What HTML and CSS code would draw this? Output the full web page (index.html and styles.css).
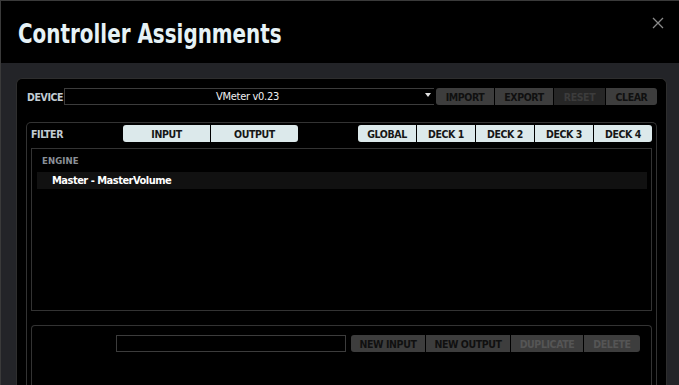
FILE: index.html
```html
<!DOCTYPE html>
<html lang="en">
<head>
  <meta charset="UTF-8" />
  <title>Controller Assignments</title>
  <link rel="stylesheet" href="styles.css">
</head>
<body>
  <div class="dialog">
    <div class="titlebar">
      <h1 class="title">Controller Assignments</h1>
      <svg class="close" width="12" height="12" viewBox="0 0 12 12">
        <path d="M1 1 L11 11 M11 1 L1 11" stroke="#8a8a8a" stroke-width="1.3" fill="none" />
      </svg>
    </div>

    <div class="content">
      <div class="panel">
        <div class="device-row">
          <span class="label">DEVICE</span>
          <div class="select">
            <span>VMeter v0.23</span>
            <span class="arrow"></span>
          </div>
          <div class="btns dark">
            <button>IMPORT</button>
            <button>EXPORT</button>
            <button class="off">RESET</button>
            <button>CLEAR</button>
          </div>
        </div>

        <div class="group">
          <div class="filter-row">
            <span class="label filter-label">FILTER</span>
            <div class="btns light io">
              <button>INPUT</button>
              <button>OUTPUT</button>
            </div>
            <div class="btns light decks">
              <button>GLOBAL</button>
              <button>DECK 1</button>
              <button>DECK 2</button>
              <button>DECK 3</button>
              <button>DECK 4</button>
            </div>
          </div>

          <div class="list">
            <div class="section">ENGINE</div>
            <div class="row">Master - MasterVolume</div>
          </div>

          <div class="editor">
            <div class="name-box"></div>
            <div class="btns dark">
              <button class="new-input">NEW INPUT</button>
              <button class="new-output">NEW OUTPUT</button>
              <button class="off dup">DUPLICATE</button>
              <button class="off del">DELETE</button>
            </div>
          </div>
        </div>
      </div>
    </div>
  </div>
</body>
</html>
```

FILE: styles.css
```css
* {
  margin: 0;
  padding: 0;
  box-sizing: border-box;
}

body {
  width: 679px;
  height: 385px;
  background: #000;
  font-family: "Liberation Sans Narrow", "DejaVu Sans Condensed", "Liberation Sans", sans-serif;
  overflow: hidden;
}

.dialog {
  height: 100%;
  border-top: 1px solid #3a3a3a;
  border-left: 1px solid #3a3a3a;
  display: flex;
  flex-direction: column;
}

.titlebar {
  height: 62px;
  flex-shrink: 0;
  background: #000;
  display: flex;
  align-items: center;
  justify-content: space-between;
  padding: 0 15px 0 17px;
}

/* шрифт заголовка сжат по ширине, как в оригинале */
.title {
  font-size: 27px;
  font-weight: 700;
  color: #e6f2f6;
  transform: scaleX(0.82);
  transform-origin: left center;
  white-space: nowrap;
  margin-top: 2px;
}

.close {
  margin-bottom: 18px;
}

.content {
  flex: 1;
  min-height: 0;
  overflow: hidden;
  background: #232428;
  padding: 15px 12px 0 15px;
  display: flex;
}

.panel {
  flex: 1;
  background: #000;
  border: 1px solid #2e2e2e;
  border-bottom: none;
  border-radius: 6px 6px 0 0;
  padding: 9px 9px 0 9px;
}

.label {
  font-size: 10.5px;
  font-weight: 700;
  letter-spacing: -0.4px;
  color: #c3ccd4;
}

.device-row {
  display: flex;
  align-items: center;
  height: 17px;
}

.device-row .label {
  width: 38px;
  padding-left: 1px;
}

.select {
  width: 370px;
  height: 17px;
  border: 1px solid #3c3c3c;
  border-right: none;
  position: relative;
  display: flex;
  align-items: center;
  justify-content: center;
  font-size: 11px;
  letter-spacing: -0.3px;
  color: #f0f0f0;
  padding-right: 4px;
}

.arrow {
  position: absolute;
  right: 3px;
  top: 4px;
  width: 0;
  height: 0;
  border-left: 3px solid transparent;
  border-right: 3px solid transparent;
  border-top: 4px solid #e0e0e0;
}

.btns {
  display: flex;
  height: 17px;
}

.btns button {
  font-family: inherit;
  font-size: 10.5px;
  font-weight: 700;
  letter-spacing: -0.4px;
  border: none;
  height: 17px;
  cursor: pointer;
}

.btns button + button {
  margin-left: 1px;
}

.btns button:first-child {
  border-radius: 3px 0 0 3px;
}

.btns button:last-child {
  border-radius: 0 3px 3px 0;
}

.dark button {
  background: #3d3d3d;
  color: #101010;
}

.dark button.off {
  background: #262626;
  color: #3c3c3c;
}

.device-row .dark {
  margin-left: 2px;
}

.device-row .dark button {
  width: 58px;
}

.device-row .dark button:nth-child(3) {
  width: 51px;
}

.device-row .dark button:nth-child(4) {
  width: 51px;
}

.light button {
  background: #dce9eb;
  color: #161616;
}

.group {
  margin-top: 17px;
  border: 1px solid #333;
  border-bottom: none;
  border-radius: 5px 5px 0 0;
  padding: 2px 4px 0 4px;
  height: 270px;
}

.filter-row {
  display: flex;
  align-items: center;
  height: 17px;
}

.filter-label {
  width: 92px;
}

.io button {
  width: 87px;
}

.decks {
  margin-left: auto;
}

.decks button {
  width: 58px;
}

.list {
  margin-top: 6px;
  height: 163px;
  border: 1px solid #333;
  padding: 6px 4px 0 5px;
}

.section {
  font-size: 9.5px;
  font-weight: 700;
  color: #8a9097;
  padding-left: 5px;
  height: 17px;
  letter-spacing: 0.1px;
}

.row {
  background: #111;
  height: 17px;
  font-size: 11px;
  font-weight: 700;
  letter-spacing: -0.5px;
  color: #fff;
  padding-left: 15px;
  display: flex;
  align-items: center;
}

.editor {
  margin-top: 14px;
  border: 1px solid #333;
  border-bottom: none;
  border-radius: 4px 4px 0 0;
  height: 70px;
  padding: 9px 10px 0 84px;
  display: flex;
  align-items: flex-start;
}

.name-box {
  width: 230px;
  height: 17px;
  border: 1px solid #3c3c3c;
  margin-right: 5px;
}

.editor button {
  color: #101010;
}

.editor .dark button {
  background: #3d3d3d;
}

.editor .dark button.off {
  color: #555;
}

.new-input {
  width: 74px;
}

.new-output {
  width: 84px;
}

.dup {
  width: 72px;
}

.del {
  width: 56px;
}
```
